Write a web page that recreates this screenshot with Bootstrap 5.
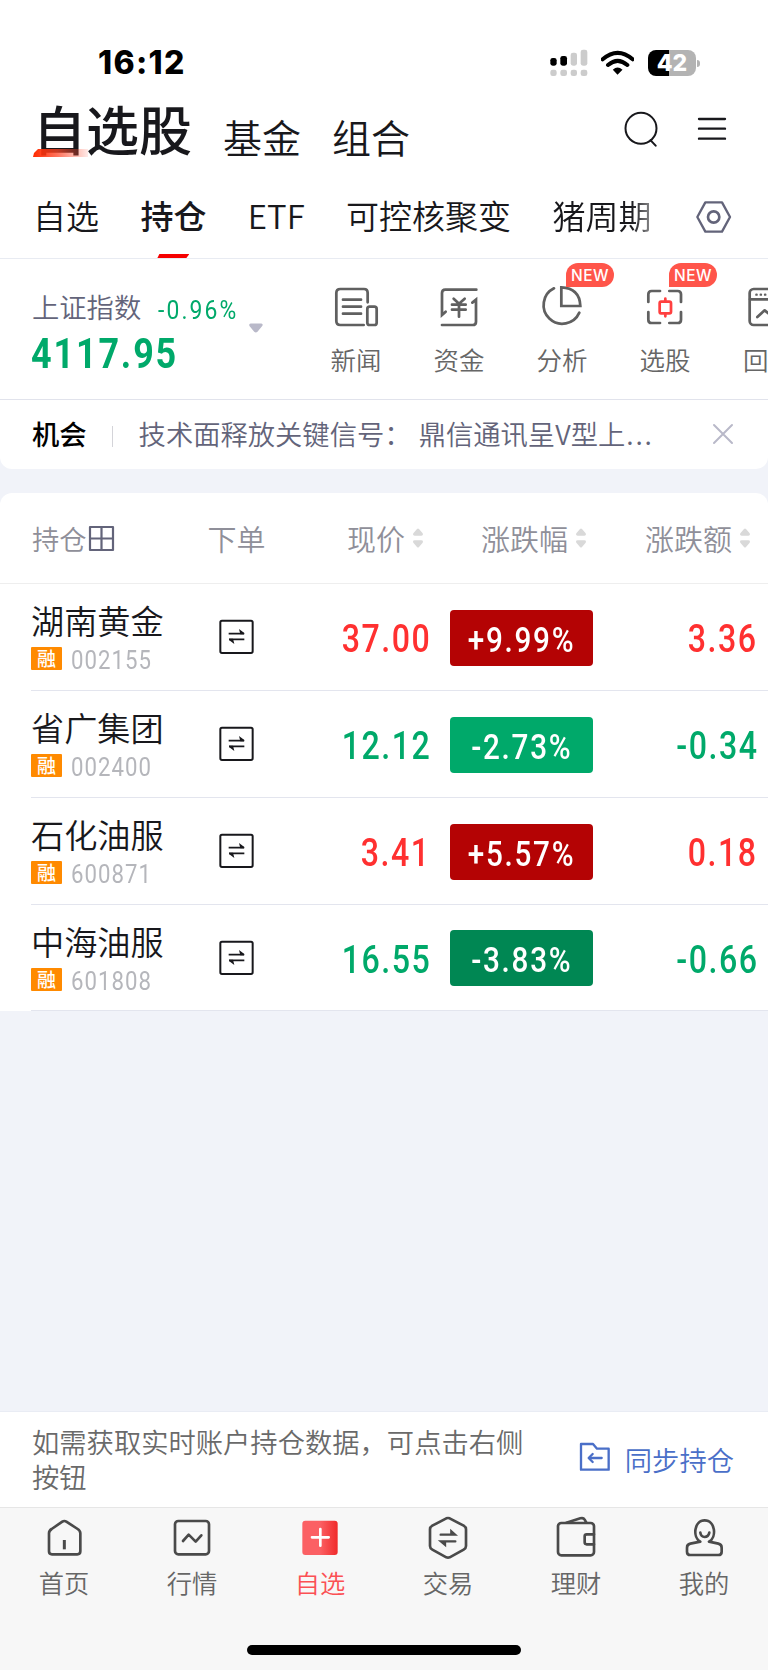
<!DOCTYPE html>
<html lang="zh-CN">
<head>
<meta charset="utf-8">
<meta name="viewport" content="width=device-width, initial-scale=1">
<title>自选股</title>
<link href="https://cdn.jsdelivr.net/npm/bootstrap@5.3.0/dist/css/bootstrap.min.css" rel="stylesheet">
<style>
body{font-family:"Noto Sans CJK SC",sans-serif;background:#f1f3f9;color:#18181c;white-space:nowrap;overflow-x:hidden;font-weight:350}
svg{display:block;flex:none;fill:none;stroke-linecap:round;stroke-linejoin:round}
.figure-num{font-family:Roboto,"Noto Sans CJK SC",sans-serif}
.screen{width:768px;height:1670px;overflow:hidden}
.statusbar{height:50px;padding:0 68px 0 98px}
.clock{font:800 32px/50px Inter,sans-serif;color:#000;letter-spacing:1.3px}
.batt{width:48px;height:26px;border-radius:8px;background:linear-gradient(90deg,#000 21px,#b3b3b3 21px);font:800 23px/26px Inter,sans-serif;color:#fff;text-align:center}
.batt-cap{width:3px;height:7px;border-radius:0 4px 4px 0;background:#b3b3b3;margin-left:1px}
.titlebar{height:95px;padding:0 41px 0 33px;gap:31px}
.title-main{font-size:53px;line-height:60px;font-weight:500;margin-bottom:15px}
.title-main::after{content:"";position:absolute;left:0;top:51px;width:55px;height:8px;background:linear-gradient(90deg,#ff2a00,rgba(255,70,40,.75) 45%,rgba(255,90,70,.12));clip-path:polygon(5px 0,100% 0,100% 100%,0 100%,1px 4px)}
.title-sub{font-size:39px;line-height:60px}
.tabsrow{height:76px;border-bottom:1px solid #e8ebf2;padding-left:33px;gap:41.4px;font-size:33px;line-height:64px}
.tab-on{font-weight:500}
.tab-on::after{content:"";position:absolute;left:17px;bottom:0;width:32px;height:4px;background:#f60000;clip-path:polygon(2px 0,100% 0,calc(100% - 3px) 100%,0 100%)}
.tab-fade{-webkit-mask-image:linear-gradient(90deg,#000 80%,rgba(0,0,0,.5));mask-image:linear-gradient(90deg,#000 80%,rgba(0,0,0,.5))}
.idx{height:141px;border-bottom:1px solid #e1e3ec}
.idx-box{width:304px;padding:25px 0 0 32px}
.idx-name{font-size:27.3px;line-height:44px;color:#63647a}
.idx-pct{font-size:26px;line-height:52px;letter-spacing:2.4px;margin:0 -12px 0 17px;height:44px;font-weight:450;transform:scaleX(.88);transform-origin:left}
.idx-val{font-size:42.5px;line-height:52px;font-weight:700;letter-spacing:2.2px;transform:scaleX(.845);transform-origin:left;margin-left:-1px;width:174px}
.tool{width:103px;flex:none;padding-top:23px;font-size:25.5px;line-height:32px;color:#666;text-align:center}
.tool svg{margin:0 auto 13px;stroke:#606060;stroke-width:8.2}
.tool-label{padding-left:1px}
.newtag{left:56px;top:4px;width:48px;height:24px;border-radius:12px 12px 12px 0;background:#ff554a;color:#fff;font:500 15.5px/25px Inter,sans-serif;letter-spacing:.4px}
.up{color:#ff3030}.down{color:#00a96a}
.notice{height:69px;border-radius:0 0 12px 12px;padding-left:32px;font-size:27.3px;line-height:66px;color:#63647a}
.vline{width:1px;height:21px;background:#d4d4d9;margin:26px 26px 0 25px}
.holdings{margin-top:24px;border-radius:12px 12px 0 0}
.hrow{display:grid;grid-template-columns:178px 55px 166px 143px 184px;padding-left:31px}
.headrow{height:91px;border-bottom:1px solid #eee;font-size:29px;line-height:90px;color:#8f8f99}
.stock{height:107px;position:relative;align-items:center}
.stock::after{content:"";position:absolute;left:31px;right:0;bottom:0;height:1px;background:#e3e5ee}
.stock:last-child{height:106px}
.nm{font-size:33.2px;line-height:40px;margin:16px 0 7px}
.rz{width:31px;height:23px;background:#ff8a00;border-radius:1px;color:#fff;font-size:19px;line-height:21px;font-weight:500;padding-left:6px}
.code{font-size:25.5px;line-height:26px;color:#b5b6bb;letter-spacing:1.2px;margin-left:9px;font-weight:450;transform:scaleX(.87);transform-origin:left}
.price{font-size:38.5px;line-height:50px;font-weight:500;letter-spacing:1.8px;text-align:right;padding-top:3px}
.price span{display:inline-block;transform:scaleX(.835);transform-origin:right;margin-right:-1px}
.chip{height:56px;border-radius:4px;margin:0 -1px 0 20px;width:143px;color:#fff;font-size:34.5px;line-height:60px;font-weight:500;letter-spacing:2px;text-align:center}
.chip span{display:inline-block;transform:scaleX(.86);margin:0 -12px}
.lv-up{background:#b40304}.lv-down{background:#00a96a}.lv-deep{background:#008753}
.filler{height:400px}
.syncbar{height:96px;border-top:1px solid #e9ecf4;padding:12px 34px 0 32px;font-size:27.3px;line-height:34.5px;color:#6a6a6a}
.syncbtn{color:#4a6fc8;gap:14px}
.bottomnav{height:163px;background:#f7f7f7;border-top:1px solid #e6e6e6}
.navitem{width:128px;padding-top:4px;font-size:25.3px;line-height:32px;color:#666;text-align:center}
.navitem svg{margin:0 auto 6px;stroke:#4a4a4a;stroke-width:8}
.homebar{left:247px;bottom:15px;width:274px;height:10px;border-radius:5px;background:#000}
</style>
</head>
<body>
<svg width="0" height="0" class="position-absolute"><defs>
<symbol id="swap" viewBox="657 387 105 105"><rect x="661" y="392" width="97" height="97" rx="5" stroke-width="6"/><path d="M686 431h46M733 448h-46" stroke-width="5" stroke-linecap="butt"/><path d="M717 417l16 12v4h-12zM703 462l-16-12v-4h12z" fill="#18181c" stroke="none"/></symbol>
<symbol id="sort" viewBox="0 0 30 58"><path d="M12 2q3-3 6 0l11 13q3 7-4 7H5q-7 0-4-7zM12 56q3 3 6 0l11-13q3-7-4-7H5q-7 0-4 7z" fill="#d9d9d9"/></symbol>
<linearGradient id="redg"><stop offset=".5" stop-color="#fb6064"/><stop offset="1" stop-color="#f02a2a"/></linearGradient>
</defs></svg>
<main class="screen">
<header class="bg-white" style="padding-top:38px">
  <div class="statusbar d-flex align-items-center">
    <span class="clock me-auto">16:12</span>
    <svg width="38" height="28" viewBox="499 55 114 84"><g fill="#ccc"><rect x="561" y="66" width="19" height="39" rx="7"/><rect x="591" y="57" width="20" height="48" rx="7"/><rect x="500" y="117" width="19" height="19" rx="7"/><rect x="530" y="117" width="20" height="19" rx="7"/><rect x="561" y="117" width="19" height="19" rx="7"/><rect x="591" y="117" width="20" height="19" rx="7"/></g><g fill="#000"><rect x="500" y="82" width="19" height="23" rx="7"/><rect x="530" y="76" width="20" height="29" rx="7"/></g></svg>
    <svg style="margin:0 14px 0 13px" width="33" height="26" viewBox="652 58 99 78" stroke="#000" stroke-width="12" stroke-linecap="butt"><path d="M657 86q45-39 90 0M673 103q29-25 58 0"/><path d="M701.500 132l-14-15q14-13 29 0z" fill="#000" stroke="none"/></svg>
    <span class="batt">42</span><span class="batt-cap"></span>
  </div>
  <div class="titlebar d-flex align-items-center">
    <span class="title-main position-relative">自选股</span><span class="title-sub">基金</span><span class="title-sub me-auto">组合</span>
    <svg width="34" height="36" viewBox="719 243 102 108" stroke="#18181c" stroke-width="6" style="margin-bottom:13px"><circle cx="770" cy="295" r="46.500"/><path d="M799 331l15 16"/></svg>
    <svg width="30" height="26" viewBox="940 258 90 78" stroke="#18181c" stroke-width="7" style="margin:0 0 13px 8px"><path d="M946 267h78M946 296h78M946 326h78"/></svg>
  </div>
  <nav class="tabsrow d-flex">
    <span>自选</span><span class="tab-on position-relative">持仓</span><span>ETF</span><span>可控核聚变</span><span class="tab-fade">猪周期</span>
    <svg width="36" height="34" viewBox="935 509 108 102" stroke="#63647a" stroke-width="7" style="margin:17px 0 0 3px"><path d="M963 516h50l24 44-24 44h-50l-24-44z"/><circle cx="988" cy="560" r="17" stroke-width="8"/></svg>
  </nav>
</header>
<section class="idx bg-white d-flex">
  <div class="idx-box d-flex flex-shrink-0">
    <div>
      <div class="d-flex"><span class="idx-name">上证指数</span><span class="idx-pct figure-num down">-0.96%</span></div>
      <div class="idx-val figure-num down">4117.95</div>
    </div>
    <svg width="14" height="10" viewBox="747 203 43 29" style="margin:39px 0 0 11px"><path d="M752 204h33q7 2 2 8l-14 17q-5 4-10 0l-14-17q-4-6 3-8z" fill="#b9b9c9"/></svg>
  </div>
  <div class="tool"><svg width="48" height="48" viewBox="35 78 144 144"><path d="M142 139v-28q0-12-11-12H60q-12 0-12 12v84q0 12 12 12h70M68 131h54M68 152h54M68 173h54"/><rect x="141" y="152" width="28" height="55" rx="7"/></svg><div class="tool-label">新闻</div></div>
  <div class="tool"><svg width="48" height="48" viewBox="345 78 144 144"><path d="M469 101H376q-10 0-10 10v66l11-10M366 207h92q10 0 10-10v-66l-11 9M401 128l16 15 17-15M396 146h41M396 161h41M417 144v38" stroke-linejoin="miter"/></svg><div class="tool-label">资金</div></div>
  <div class="tool position-relative"><svg width="48" height="48" viewBox="657 78 144 144"><path d="M705 97a56 56 0 1 0 76 73M727 94v56h57q-2-54-57-56z" stroke-linejoin="miter"/></svg><div class="tool-label">分析</div><span class="newtag position-absolute">NEW</span></div>
  <div class="tool position-relative"><svg width="48" height="48" viewBox="965 78 144 144" stroke-linecap="butt"><path d="M987 138v-23q0-10 10-10h25M1050 105h25q10 0 10 10v23M1085 168v23q0 10-10 10h-25M1022 201h-25q-10 0-10-10v-23"/><path stroke="#ff4040" d="M1025 137h25q5 0 5 5v25q0 5-5 5h-25q-4 0-4-5v-25q0-5 4-5zM1038 128v9M1038 172v9"/></svg><div class="tool-label">选股</div><span class="newtag position-absolute">NEW</span></div>
  <div class="tool"><svg width="48" height="48" viewBox="1272 78 144 144"><rect x="1289" y="99" width="110" height="108" rx="12"/><path d="M1290 130h108M1312 183l22-20 22 18 20-20"/><path d="M1309 116h1M1322 116h1M1335 116h1" stroke-width="7"/></svg><div class="text-start" style="margin-left:27px">回</div></div>
</section>
<section class="notice bg-white d-flex">
  <span class="text-black" style="font-weight:500">机会</span><i class="vline"></i><span>技术面释放关键信号： <span style="margin-left:1px">鼎信通讯呈V型上</span><span style="letter-spacing:1.800px;margin-left:1px">...</span></span>
  <svg class="ms-auto" width="22" height="22" viewBox="0 0 22 22" stroke="#b9b9c9" stroke-width="2" style="margin:23px 34px 0 0"><path d="M2 2l18 18M20 2L2 20"/></svg>
</section>
<section class="holdings bg-white">
  <div class="hrow headrow">
    <span class="d-flex" style="font-size:27.3px"><span style="margin-left:1px">持仓</span><svg width="27" height="27" viewBox="0 0 27 27" stroke="#63647a" stroke-width="2.200" style="margin:32px 0 0 1px" stroke-linejoin="miter"><path d="M2 2h23v23H2zM13.500 2v23M2 13.500h23"/></svg></span>
    <span style="margin-left:-1.500px">下单</span>
    <span class="d-flex justify-content-end align-items-center">现价<svg width="10" height="20" style="margin:0 7px 0 8px"><use href="#sort"/></svg></span>
    <span class="d-flex justify-content-end align-items-center">涨跌幅<svg width="10" height="20" style="margin:0 -13px 0 8px"><use href="#sort"/></svg></span>
    <span class="d-flex justify-content-end align-items-center">涨跌额<svg width="10" height="20" style="margin:0 7px 0 8px"><use href="#sort"/></svg></span>
  </div>
  <div>
  <div class="hrow stock"><div class="align-self-start"><div class="nm">湖南黄金</div><div class="d-flex"><span class="rz">融</span><span class="code figure-num">002155</span></div></div><svg class="mx-auto" width="35" height="35" stroke="#18181c" style="margin-bottom:2px"><use href="#swap"/></svg><div class="price figure-num up"><span>37.00</span></div><div class="chip figure-num lv-up"><span>+9.99%</span></div><div class="price figure-num up"><span>3.36</span></div></div>
  <div class="hrow stock"><div class="align-self-start"><div class="nm">省广集团</div><div class="d-flex"><span class="rz">融</span><span class="code figure-num">002400</span></div></div><svg class="mx-auto" width="35" height="35" stroke="#18181c" style="margin-bottom:2px"><use href="#swap"/></svg><div class="price figure-num down"><span>12.12</span></div><div class="chip figure-num lv-down"><span>-2.73%</span></div><div class="price figure-num down"><span>-0.34</span></div></div>
  <div class="hrow stock"><div class="align-self-start"><div class="nm">石化油服</div><div class="d-flex"><span class="rz">融</span><span class="code figure-num">600871</span></div></div><svg class="mx-auto" width="35" height="35" stroke="#18181c" style="margin-bottom:2px"><use href="#swap"/></svg><div class="price figure-num up"><span>3.41</span></div><div class="chip figure-num lv-up"><span>+5.57%</span></div><div class="price figure-num up"><span>0.18</span></div></div>
  <div class="hrow stock"><div class="align-self-start"><div class="nm">中海油服</div><div class="d-flex"><span class="rz">融</span><span class="code figure-num">601808</span></div></div><svg class="mx-auto" width="35" height="35" stroke="#18181c" style="margin-bottom:2px"><use href="#swap"/></svg><div class="price figure-num down"><span>16.55</span></div><div class="chip figure-num lv-deep"><span>-3.83%</span></div><div class="price figure-num down"><span>-0.66</span></div></div>
  </div>
</section>
<div class="filler"></div>
<section class="syncbar bg-white d-flex justify-content-between">
  <div>如需获取实时账户持仓数据，可点击右侧<br>按钮</div>
  <div class="syncbtn d-flex"><svg width="32" height="30" viewBox="585 129 96 90" stroke="#4a6fc8" stroke-width="7" stroke-linecap="butt" style="margin-top:18px" stroke-linejoin="miter"><path d="M591 135h36l12 14h35v63h-83zM653 177h-37" /><path d="M626 165l-12 12 12 12"/></svg><span style="margin-top:18px">同步持仓</span></div>
</section>
<nav class="bottomnav d-flex position-relative">
  <div class="navitem"><svg width="48" height="48" viewBox="120 336 144 144"><path d="M187 365q6-4 12 0l34 22q8 5 8 13v54q0 9-9 9h-76q-9 0-9-9v-54q0-8 8-13z"/><path d="M193 420v28" stroke-linecap="butt" stroke-width="9"/></svg>首页</div>
  <div class="navitem"><svg width="48" height="48" viewBox="504 336 144 144"><rect x="525" y="363" width="102" height="100" rx="10"/><path d="M549 423l17-19 21 21 17-19"/></svg>行情</div>
  <div class="navitem" style="color:#fb5054"><svg width="48" height="48" viewBox="888 336 144 144"><rect x="907" y="362" width="106" height="103" rx="9" fill="url(#redg)" stroke="none"/><path d="M961 387v50M936 412h50" stroke="#fff"/></svg>自选</div>
  <div class="navitem"><svg width="48" height="48" viewBox="120 336 144 144"><path d="M187 355q5-2 10 0l42 22q7 4 7 11v50q0 7-7 11l-42 23q-5 2-10 0l-42-23q-7-4-7-11v-50q0-7 7-11z"/><path d="M170 404h43l-11-10v10M214 424h-43l12 10v-10" stroke-linejoin="miter" stroke-width="7"/></svg>交易</div>
  <div class="navitem"><svg width="48" height="48" viewBox="504 336 144 144"><rect x="522" y="369" width="108" height="97" rx="10"/><path d="M630 403h-22q-6 0-6 6v18q0 6 6 6h22M547 368l42-13q9-3 13 4l5 9"/></svg>理财</div>
  <div class="navitem"><svg width="48" height="48" viewBox="888 336 144 144"><path d="M949 425c-24-13-19-64 13-64s37 51 13 64l28 6q10 2 10 12v12q0 10-10 10h-84q-10 0-10-10v-12q0-10 10-12z"/><path d="M949 398q2 13 13 13t14-13"/></svg>我的</div>
  <div class="homebar position-absolute"></div>
</nav>
</main>
<script src="https://cdn.jsdelivr.net/npm/bootstrap@5.3.0/dist/js/bootstrap.bundle.min.js"></script>
</body>
</html>
